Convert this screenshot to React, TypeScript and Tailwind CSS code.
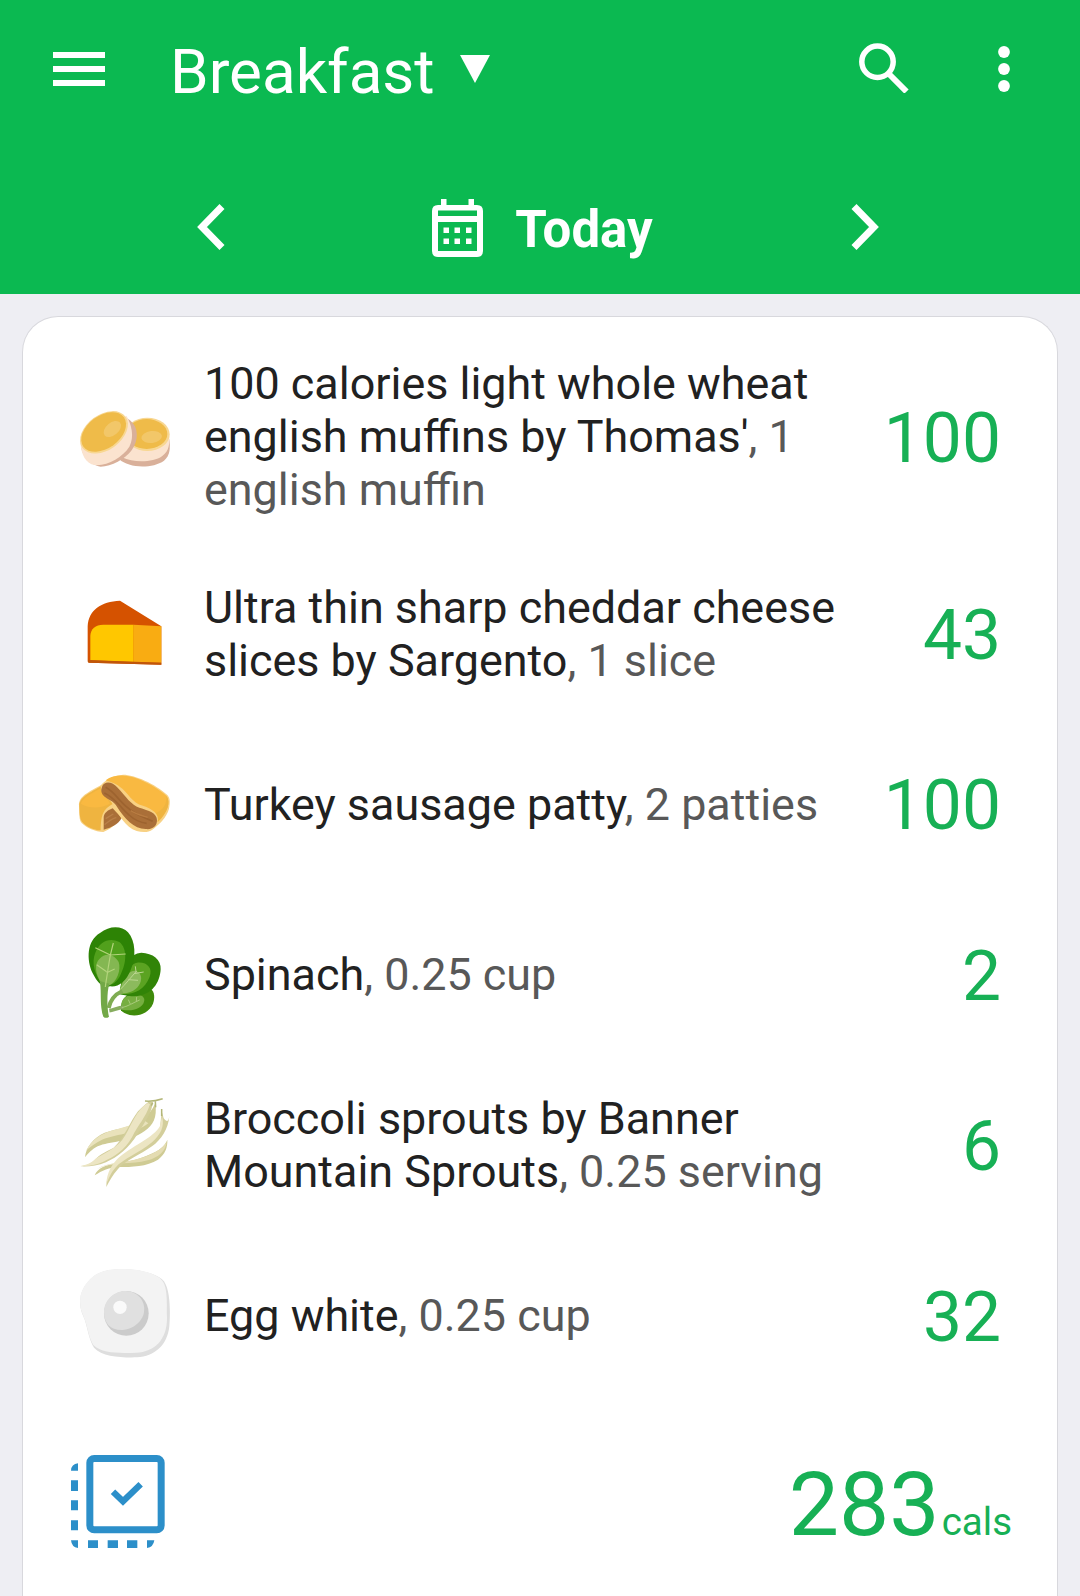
import React from 'react';

const MuffinIcon = () => (
  <svg width="130" height="100" viewBox="0 -6 390 300" className="shrink-0">
    <path d="M178 208 C205 234 275 238 312 212 C331 197 331 172 328 148 L220 150 Z" fill="#d9b09a" />
    <path d="M186 202 C222 220 280 217 306 199 C330 182 328 160 328 136 L200 130 Z" fill="#fbe3cf" />
    <ellipse cx="262" cy="133" rx="67" ry="50" fill="#f8d792" />
    <ellipse cx="260" cy="132" rx="62" ry="45" fill="#efbb49" />
    <ellipse cx="275" cy="141" rx="31" ry="18" transform="rotate(-7 275 141)" fill="#f2c769" />
    <path d="M64 175 C70 205 98 228 122 230 C155 230 195 208 215 181 C236 153 237 112 210 91 L180 70 Z" fill="#d9b09a" />
    <path d="M61 158 C64 193 76 220 104 225 C140 229 188 202 208 170 C224 140 214 104 200 78 Z" fill="#fbe3cf" />
    <ellipse cx="132" cy="127" rx="80" ry="53" transform="rotate(-36 132 127)" fill="#f8d792" />
    <ellipse cx="131" cy="126" rx="75" ry="49" transform="rotate(-36 131 126)" fill="#efbb49" />
    <ellipse cx="157" cy="117" rx="30" ry="19" transform="rotate(-40 157 117)" fill="#f2c769" />
  </svg>
);

const CheeseIcon = () => (
  <svg width="130" height="100" viewBox="0 13 390 300" className="shrink-0">
    <path d="M83 242 V137 C86 87 123 63 180 60 L304 137 V252 L87 246 Q83 246 83 242 Z" fill="#d55200" />
    <path d="M91 239 V166 C92 144 106 132 130 132 H221 V244 Z" fill="#ffc700" />
    <path d="M221 132 L304 137 V246 L221 244 Z" fill="#f9ac12" />
    <path d="M84 238 L304 246 V252 L87 246 Q83 246 84 238 Z" fill="#c0560a" />
  </svg>
);

const PattyIcon = () => (
  <svg width="130" height="100" viewBox="0 2 390 300" className="shrink-0">
    <path d="M57 151 C56 127 72 116 125 88 L190 160 C187 190 160 218 130 230 C105 229 80 218 65 203 C57 194 58 175 57 151 Z" fill="#f8d184" />
    <path d="M58 150 C60 129 75 119 124 93 L158 146 C130 162 123 176 122 225 C100 224 78 213 66 199 C58 188 59 170 58 150 Z" fill="#efb440" />
    <path d="M62 145 C68 128 90 116 125 97 L150 145 C126 157 95 163 62 145 Z" fill="#f9b941" />
    <path d="M131 223 V186 C132 172 145 164 158 159 L185 188 C175 207 153 217 131 223 Z" fill="#aa6f38" />
    <path d="M134 208 C147 198 157 188 169 187 M137 190 L160 176" stroke="#b98049" strokeWidth="4" fill="none" />
    <path d="M122 91 C131 78 157 59 190 58 C222 58 286 85 322 119 C332 130 330 145 327 160 C320 187 297 207 277 223 C266 232 246 231 230 227 C195 214 179 182 160 148 C150 130 121 120 122 91 Z" fill="#f8d184" />
    <path d="M137 75 C151 64 172 60 192 61 C228 62 286 91 319 121 C333 140 323 171 293 200 C299 176 277 160 249 151 C215 143 205 111 179 94 C165 83 146 79 137 75 Z" fill="#f9b941" />
    <path d="M319 121 C333 140 323 171 293 200 C296 188 294 180 288 173 C310 162 321 146 319 121 Z" fill="#efb440" />
    <path d="M127 92 C134 76 157 78 173 97 C198 124 214 149 238 157 C266 166 291 172 291 195 C291 211 279 224 257 221 C222 220 193 190 169 151 C158 132 121 129 124 102 Z" fill="#aa6f38" />
    <path d="M137 96 C163 109 178 138 202 156 C227 180 256 186 278 198 M133 113 C164 126 181 157 207 179 C225 195 242 202 260 204" stroke="#9d632f" strokeWidth="5" fill="none" />
    <path d="M212 166 C230 178 247 181 263 186" stroke="#b87c42" strokeWidth="4" fill="none" />
  </svg>
);

const SpinachIcon = () => (
  <svg width="130" height="120" viewBox="0 17 390 360" className="shrink-0">
    <path d="M183 300 C181 285 188 258 208 252 L270 234 C286 244 284 266 279 280 C267 307 237 320 209 314 C197 311 188 306 183 300 Z" fill="#3f8b0b" />
    <path d="M187 298 C178 273 192 254 220 254 C239 249 258 260 252 274 C247 294 216 305 187 298 Z" fill="#76ae40" />
    <path d="M148 301 C161 299 174 292 190 291" stroke="#87ad60" strokeWidth="11" fill="none" />
    <path d="M185 292 C202 289 220 277 239 269 M211 281 L205 268 M229 272 L230 260" stroke="#a9cb7b" strokeWidth="3" fill="none" />
    <path d="M188 191 C191 163 209 130 244 127 C278 128 304 148 302 177 C300 216 277 256 223 258 C201 258 187 253 178 252 Z" fill="#318407" />
    <path d="M180 251 C179 219 201 163 231 157 C262 154 279 174 269 199 C254 239 222 253 180 251 Z" fill="#5ba322" />
    <path d="M180 250 C183 211 203 181 224 181 C245 184 249 207 236 226 C224 243 205 249 180 250 Z" fill="#8cba5d" />
    <path d="M146 293 C151 268 163 253 187 242" stroke="#7fac52" strokeWidth="12" fill="none" />
    <path d="M180 238 C196 222 212 202 230 182 M205 208 L234 210 M222 190 L251 185 M228 184 L226 168" stroke="#bcd792" strokeWidth="3" fill="none" />
    <path d="M151 228 C127 234 112 216 98 189 C79 149 80 91 120 68 C149 45 185 46 204 66 C227 91 229 142 212 179 C198 214 177 230 151 228 Z" fill="#2d8305" />
    <path d="M130 224 C102 193 94 156 106 127 C119 93 149 80 178 95 C204 115 198 161 183 190 C171 220 149 229 130 224 Z" fill="#51a01c" />
    <path d="M126 222 C104 190 103 160 119 145 C138 123 166 135 176 155 C184 178 171 216 146 226 Z" fill="#84b752" />
    <path d="M119 212 C124 232 121 268 124 292 Q126 310 130 319 Q138 326 147 319 C142 300 139 250 148 220 Z" fill="#72a847" />
    <path d="M136 230 C138 212 142 192 145 170 L151 134 L160 98 M151 134 L197 131 M151 134 L106 112 M140 184 L110 163 M140 187 L164 176" stroke="#b3d47c" strokeWidth="3.500" fill="none" />
  </svg>
);

const SproutsIcon = () => (
  <svg width="130" height="120" viewBox="0 6 390 360" className="shrink-0">
    <path d="M75 217 C77 187 101 158 134 143 C173 130 220 127 248 102 C277 80 280 65 286 55 C292 99 279 121 254 138 C206 173 150 168 113 184 C94 194 85 205 75 217 Z" fill="#cfcb94" />
    <path d="M78 197 C95 166 119 149 151 138 C192 126 225 119 246 101 L265 115 C222 148 162 149 126 164 C107 174 91 184 78 197 Z" fill="#e9e2bb" />
    <path d="M104 271 C113 249 135 239 170 236 C222 229 253 216 279 204 C306 191 315 180 322 164 C323 187 316 207 294 224 C261 245 213 246 178 246 C146 246 127 257 104 271 Z" fill="#cfcb94" />
    <path d="M110 252 C151 230 198 234 239 220 C278 208 306 194 320 170 C318 198 295 217 263 226 C214 240 160 228 110 252 Z" fill="#e4dcb2" />
    <path d="M139 306 C139 281 150 256 169 238 C212 199 272 178 300 130 L305 78 L311 100 C324 116 326 104 328 93 C325 131 304 164 276 184 C241 209 193 229 174 252 C158 270 147 290 139 306 Z" fill="#d3ce9b" />
    <path d="M139 297 C140 265 155 236 181 214 C223 180 280 158 300 123 L306 94 C315 125 301 150 276 172 C235 206 190 221 166 248 C151 265 145 284 139 297 Z" fill="#ece5c3" />
    <path d="M108 222 C117 209 132 203 161 188 C195 157 211 108 234 79 C246 66 256 58 266 50 L278 51 C277 82 256 109 234 145 C206 191 173 216 138 232 C112 243 86 245 61 244 C85 240 97 234 108 222 Z" fill="#d3ce9b" />
    <path d="M61 243 C85 240 98 231 108 220 C138 202 174 188 195 152 C215 119 230 74 264 54 L270 58 C257 99 234 119 216 157 C194 195 165 215 130 230 C105 241 85 243 61 243 Z" fill="#ece5c3" />
    <path d="M255 48 C276 50 296 45 308 41 M278 53 L274 62 M286 50 L287 67 M305 93 L305 72" stroke="#b3b678" strokeWidth="4.500" fill="none" />
  </svg>
);

const EggIcon = () => (
  <svg width="130" height="120" viewBox="0 6 390 360" className="shrink-0">
    <path d="M61 151 C58 120 68 94 96 68 C124 45 155 43 195 43 C235 44 292 54 312 79 C334 111 330 187 328 214 C322 271 284 304 231 307 C184 308 127 306 102 278 C89 257 85 232 77 203 C72 184 62 172 61 151 Z" fill="#dedede" />
    <path d="M61 150 C57 120 68 93 96 67 C124 44 155 42 195 42 C235 43 289 53 307 77 C324 98 320 151 321 187 C322 255 283 290 229 293 C184 294 126 297 100 270 C88 252 85 229 77 202 C72 183 62 170 61 150 Z" fill="#f3f3f3" />
    <circle cx="199" cy="175" r="67" fill="#cbcbcb" />
    <path d="M132 171 C132 138 160 108 196 108 C232 109 258 137 252 171 C248 202 214 224 188 225 C151 226 132 205 132 171 Z" fill="#e0e0e0" />
    <circle cx="180" cy="157" r="20" fill="#fafafa" />
  </svg>
);

const items = [
  { name: "100 calories light whole wheat english muffins by Thomas'", amount: '1 english muffin', cals: 100, icon: MuffinIcon, height: 'h-[224px]' },
  { name: 'Ultra thin sharp cheddar cheese slices by Sargento', amount: '1 slice', cals: 43, icon: CheeseIcon, height: 'h-[170.5px]' },
  { name: 'Turkey sausage patty', amount: '2 patties', cals: 100, icon: PattyIcon, height: 'h-[170.5px]' },
  { name: 'Spinach', amount: '0.25 cup', cals: 2, icon: SpinachIcon, height: 'h-[170.5px]' },
  { name: 'Broccoli sprouts by Banner Mountain Sprouts', amount: '0.25 serving', cals: 6, icon: SproutsIcon, height: 'h-[170.5px]' },
  { name: 'Egg white', amount: '0.25 cup', cals: 32, icon: EggIcon, height: 'h-[170.5px]' },
];

const Header = () => (
  <header className="h-[294px] shrink-0 bg-[#0bb951] text-white">
    <div className="flex h-[138px] items-center pl-[53px] pr-[70px]">
      <button aria-label="Menu" className="flex w-[52px] flex-col gap-2">
        <span className="h-[6px] w-full bg-white" />
        <span className="h-[6px] w-full bg-white" />
        <span className="h-[6px] w-full bg-white" />
      </button>
      <h1 className="ml-[65px] mt-[6px] text-[62px] leading-[74px]">Breakfast</h1>
      <svg width="30" height="28" viewBox="0 0 30 28" className="ml-[25px]" fill="currentColor">
        <path d="M0 0H30L15 28Z" />
      </svg>
      <button aria-label="Search" className="mb-[3px] ml-auto">
        <svg width="50" height="50" viewBox="0 0 50 50" fill="none" stroke="currentColor" strokeWidth="5.500">
          <circle cx="18.500" cy="18.800" r="15.700" />
          <path d="M30.500 31.500L47.500 48.500" strokeWidth="6" />
        </svg>
      </button>
      <button aria-label="More" className="ml-[89px]">
        <svg width="12" height="48" viewBox="0 0 12 48" fill="currentColor">
          <circle cx="6" cy="7" r="5.900" />
          <circle cx="6" cy="24" r="5.900" />
          <circle cx="6" cy="41" r="5.900" />
        </svg>
      </button>
    </div>
    <div className="flex h-[180px] items-center justify-between pb-[2px] pl-[197px] pr-[201px]">
      <button aria-label="Previous day">
        <svg width="28" height="46" viewBox="0 0 28 46" fill="none" stroke="currentColor" strokeWidth="7">
          <path d="M25 2.500L5 23L25 43.500" />
        </svg>
      </button>
      <button className="ml-[9px] mt-[1px] flex items-center gap-[32px]">
        <svg width="51" height="58" viewBox="0 0 51 58" fill="currentColor">
          <path d="M9 0H14.500V6H36.500V0H42V6H45Q51 6 51 12V52Q51 58 45 58H6Q0 58 0 52V12Q0 6 6 6H9ZM6 11.500V17H45V11.500ZM6 23V52H45V23Z" fillRule="evenodd" />
          <path d="M11.500 28.500h5.500v5.500h-5.500zM22.500 28.500h5.500v5.500h-5.500zM34 28.500h5.500v5.500h-5.500zM11.500 39.500h5.500v5.500h-5.500zM22.500 39.500h5.500v5.500h-5.500zM34 39.500h5.500v5.500h-5.500z" />
        </svg>
        <span className="mt-[5px] text-[51px] font-bold leading-[60px]">Today</span>
      </button>
      <button aria-label="Next day">
        <svg width="28" height="46" viewBox="0 0 28 46" fill="none" stroke="currentColor" strokeWidth="7">
          <path d="M3 2.500L23 23L3 43.500" />
        </svg>
      </button>
    </div>
  </header>
);

const SelectIcon = () => (
  <svg width="94" height="93" viewBox="63 74 282 279" fill="#2c8fc9">
    <rect x="119.500" y="84.500" width="214" height="214" rx="13" fill="none" stroke="#2c8fc9" strokeWidth="21" />
    <path d="M189 184L219 213L272 162" fill="none" stroke="#2c8fc9" strokeWidth="19" />
    <path d="M63 121Q64 101 84 99V121ZM63 150H84V182H63ZM63 210H84V240H63ZM63 270H84V300H63ZM63 330H84V353Q65 351 63 330ZM114 330H144V353H114ZM173 330H204V353H173ZM231 330H262V353H231ZM291 330H313Q310 351 291 353Z" />
  </svg>
);

export default function App() {
  return (
    <div className="flex h-[1596px] w-[1080px] flex-col overflow-hidden bg-[#eeeef3] font-[Roboto,sans-serif]">
      <Header />
      <main className="mx-[22px] mt-[22px] flex-1 rounded-t-[36px] border border-b-0 border-[#d8d8dd] bg-white pt-[9px]">
        <ul>
          {items.map((item) => (
            <li key={item.name} className={`flex items-center pl-[37px] pr-[56px] ${item.height}`}>
              <item.icon />
              <p className="mb-[3px] ml-[14px] w-[650px] text-[44.9px] leading-[53.2px] text-[#212121]">
                {item.name}
                <span className="text-[#585858]">, {item.amount}</span>
              </p>
              <span className="ml-auto mt-[1px] text-[69.5px] leading-[82px] text-[#17b055]">{item.cals}</span>
            </li>
          ))}
        </ul>
        <div className="flex items-start justify-between pl-[48px] pr-[45px] pt-[52px]">
          <button aria-label="Select items">
            <SelectIcon />
          </button>
          <p className="flex items-baseline text-[#17b055]">
            <span className="text-[89.5px] leading-[100px]">283</span>
            <span className="ml-[2px] text-[38.5px] leading-[46px]">cals</span>
          </p>
        </div>
      </main>
    </div>
  );
}
